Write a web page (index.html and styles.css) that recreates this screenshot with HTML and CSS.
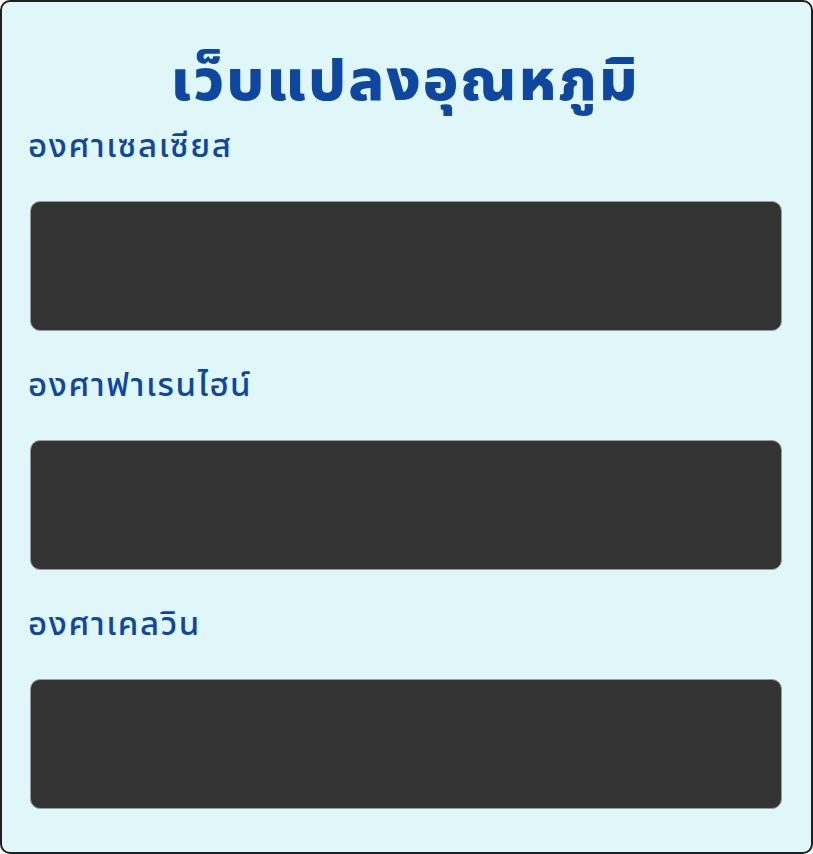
FILE: index.html
```html
<!DOCTYPE html>
<html lang="th">
<head>
<meta charset="utf-8">
<title>เว็บแปลงอุณหภูมิ</title>
<link rel="stylesheet" href="styles.css">
</head>
<body>
<div class="card">
  <h1 class="title">เว็บแปลงอุณหภูมิ</h1>
  <div class="field">
    <label class="label" for="c">องศาเซลเซียส</label>
    <input class="box" id="c" type="text">
  </div>
  <div class="field">
    <label class="label" for="f">องศาฟาเรนไฮน์</label>
    <input class="box" id="f" type="text">
  </div>
  <div class="field">
    <label class="label" for="k">องศาเคลวิน</label>
    <input class="box" id="k" type="text">
  </div>
</div>
</body>
</html>
```
FILE: styles.css
```css
* { box-sizing: border-box; }
html, body { margin: 0; padding: 0; background: #ffffff; }
body { font-family: "Noto Sans Thai UI", "Noto Sans Thai", "Kanit", "Prompt", "Noto Sans", sans-serif; }
.card {
  width: 813px;
  height: 854px;
  border: 2px solid #1f1f1f;
  border-radius: 10px;
  background: #e0f7fa;
  padding: 0 29px 0 26px;
  display: flex;
  flex-direction: column;
}
.title {
  margin: 39px 0 0;
  text-align: center;
  color: #0d47a1;
  font-size: 60px;
  font-weight: 800;
  letter-spacing: 2px;
  line-height: 72px;
}
.field {
  display: flex;
  flex-direction: column;
}
.label {
  color: #0d47a1;
  font-size: 33px;
  font-weight: 500;
  letter-spacing: 1.6px;
  line-height: 40px;
  margin: 33px 0 36px;
}
.field:first-of-type .label { margin-top: 12px; }
.box {
  margin: 0 0 0 2px;
  height: 130px;
  background: #333333;
  border: 1px solid #9a9a9a;
  border-radius: 10px;
}
```
